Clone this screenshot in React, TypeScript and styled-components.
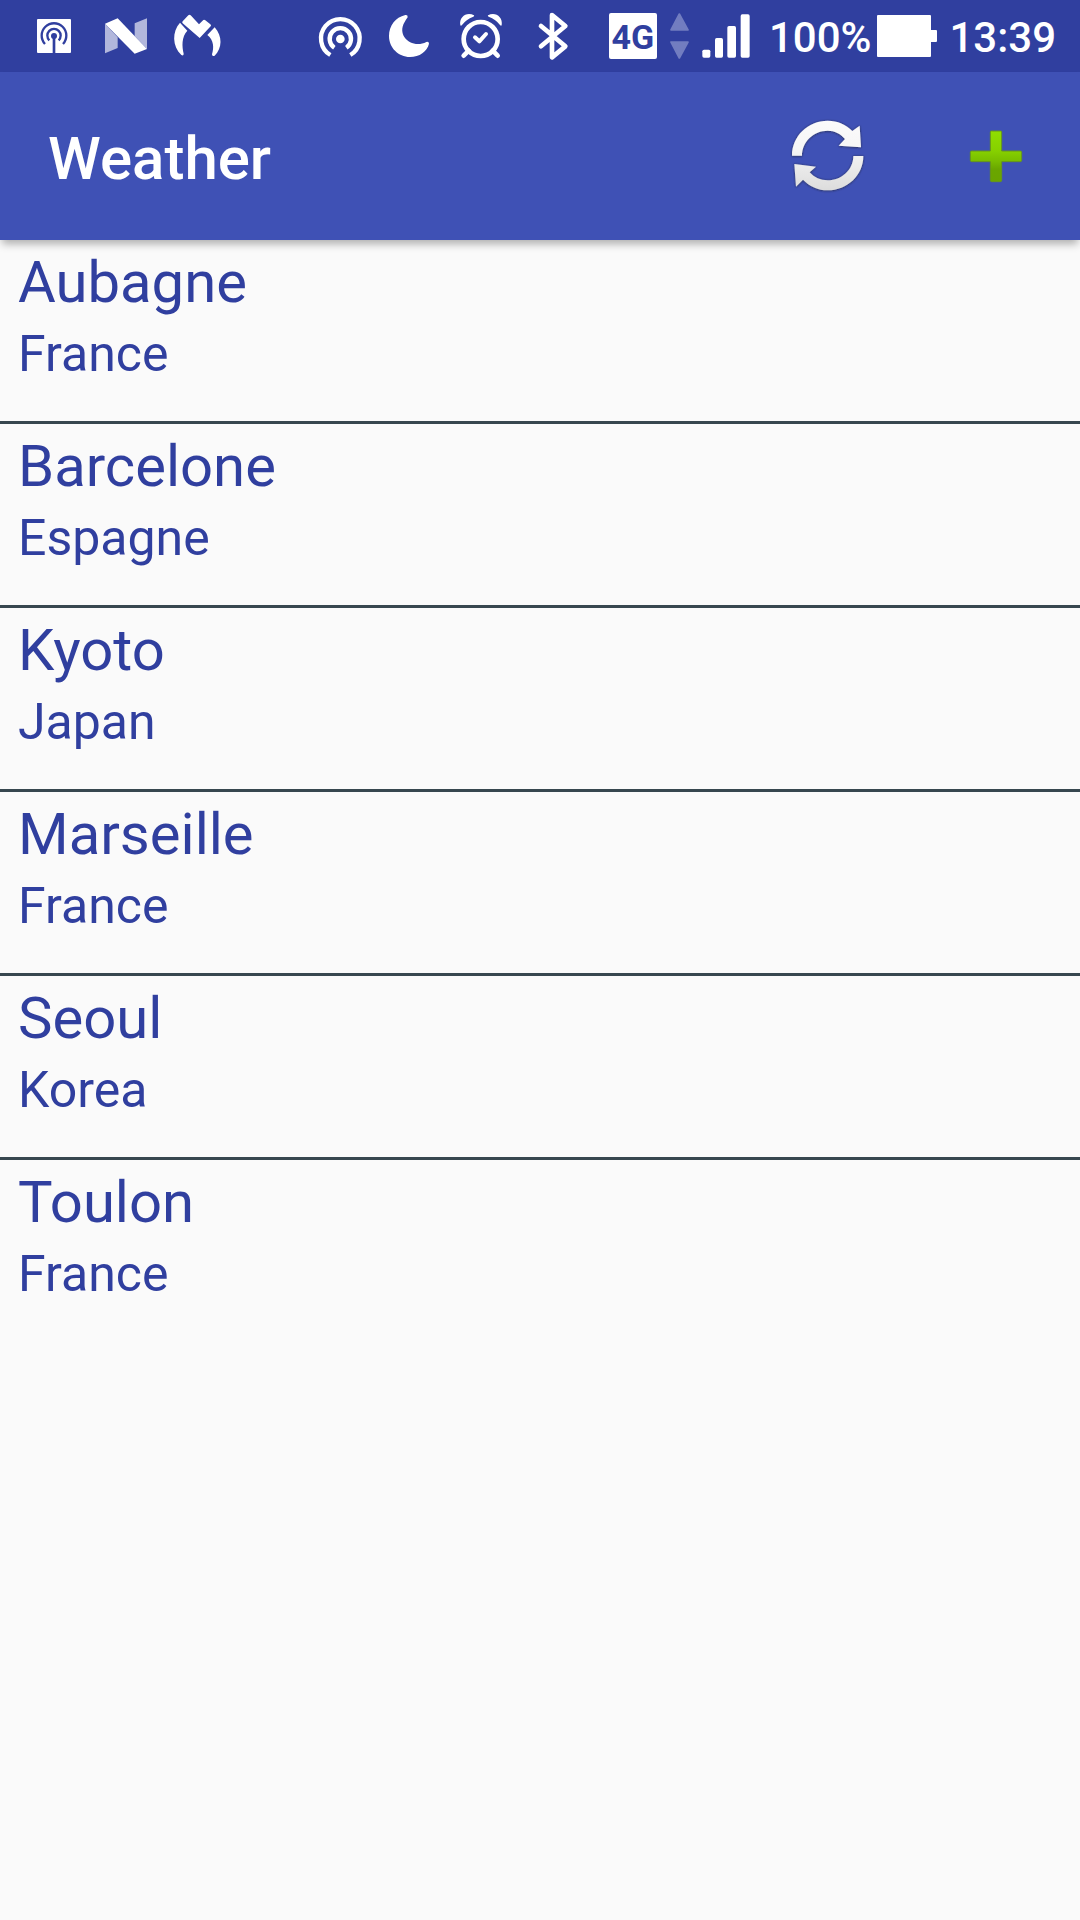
import React from 'react';
import styled, { createGlobalStyle } from 'styled-components';

const GlobalStyle = createGlobalStyle`
  *, *::before, *::after { box-sizing: border-box; }
  body {
    margin: 0;
    background: #fafafa;
    font-family: Roboto, "Noto Sans", sans-serif;
  }
`;

const Screen = styled.div`
  display: flex;
  flex-direction: column;
  min-height: 100vh;
  background: #fafafa;
`;

const StatusBar = styled.div`
  display: flex;
  align-items: center;
  height: 72px;
  padding: 0 24px 0 18px;
  background: #303f9f;
  color: #fff;
`;

const StatusGroup = styled.div<{ $end?: boolean }>`
  display: flex;
  align-items: center;
  margin-left: ${(p) => (p.$end ? 'auto' : '0')};
`;

const StatusText = styled.span`
  padding-top: 4px;
  font-size: 42px;
  font-weight: 500;
  line-height: 48px;
`;

const Glyph = styled.svg`
  display: block;
  flex: none;
  width: 72px;
  height: 72px;
  fill: #fff;
`;

const NetworkBadge = styled.span`
  width: 48px;
  height: 46px;
  margin: 0 13px 0 17px;
  border-radius: 2px;
  background: #fff;
  color: #303f9f;
  font-size: 34px;
  font-weight: 700;
  line-height: 48px;
  text-align: center;
`;

const Signal = styled.svg`
  display: block;
  width: 80px;
  height: 72px;
  margin-right: 19px;
  fill: #fff;
`;

const Battery = styled.svg`
  display: block;
  width: 60px;
  height: 42px;
  margin: 0 12px 0 6px;
  fill: #fff;
`;

const AppBar = styled.header`
  display: flex;
  align-items: center;
  justify-content: space-between;
  position: relative;
  height: 168px;
  padding-left: 48px;
  background: #3f51b5;
  box-shadow: 0 6px 8px -2px rgba(0, 0, 0, 0.3);
`;

const Title = styled.h1`
  margin: 0;
  padding-top: 6px;
  color: #fff;
  font-size: 60px;
  font-weight: 500;
  line-height: 72px;
`;

const Actions = styled.div`
  display: flex;
`;

const ActionButton = styled.button`
  display: flex;
  align-items: center;
  justify-content: center;
  width: 168px;
  height: 168px;
  padding: 0;
  border: 0;
  background: transparent;
  cursor: pointer;

  svg {
    display: block;
    width: 96px;
    height: 96px;
  }
`;

const CityList = styled.ul`
  margin: 0;
  padding: 0;
  list-style: none;
`;

const CityRow = styled.li`
  height: 184px;
  padding: 6px 18px 0;
  border-bottom: 3px solid #37474f;
  color: #303f9f;

  &:last-child {
    border-bottom: 0;
  }
`;

const CityName = styled.div`
  font-size: 58px;
  line-height: 72px;
`;

const Country = styled.div`
  font-size: 50px;
  line-height: 72px;
`;

const cities = [
  { name: 'Aubagne', country: 'France' },
  { name: 'Barcelone', country: 'Espagne' },
  { name: 'Kyoto', country: 'Japan' },
  { name: 'Marseille', country: 'France' },
  { name: 'Seoul', country: 'Korea' },
  { name: 'Toulon', country: 'France' },
];

const CastGlyph = () => (
  <Glyph viewBox="-6 0 216 216" aria-hidden="true">
    <rect x="51" y="57" width="102" height="102" rx="3" />
    <g fill="none" stroke="#303f9f" strokeWidth="7">
      <path d="M75 132A37 37 0 1 1 129 132" />
      <path d="M88 121A20 20 0 1 1 116 121" />
      <path d="M102 108V159" strokeWidth="8" />
    </g>
    <circle cx="102" cy="108" r="9" fill="#303f9f" />
  </Glyph>
);

const NougatGlyph = () => (
  <Glyph viewBox="210 0 216 216" aria-hidden="true">
    <path d="M255 71L293 112V144L255 160ZM344 70L381 55V147L344 108Z" fill="#b2b7dc" />
    <path d="M255 71L293 55L381 147L344 161Z" />
  </Glyph>
);

const ClawGlyph = () => (
  <Glyph viewBox="426 0 216 216" aria-hidden="true">
    <path d="M488 70Q485 67 488 64L505 46Q508 43 512 46L537 73L550 60Q553 58 556 61L571 73Q575 76 572 79L539 114Z" />
    <path d="M480 68L502 92C484 111 486 139 491 161Q491 169 484 165C456 138 456 94 480 68Z" />
    <path d="M584 82L562 105C582 121 582 143 576 163Q576 171 584 167C607 145 608 109 584 82Z" />
  </Glyph>
);

const HotspotGlyph = () => (
  <Glyph viewBox="12 0 216 216" aria-hidden="true">
    <circle cx="121" cy="117" r="13" />
    <g fill="none" stroke="#fff" strokeWidth="13">
      <path d="M91 165A58 58 0 1 1 151 165" />
      <path d="M103 143A32 32 0 1 1 139 143" />
    </g>
  </Glyph>
);

const MoonGlyph = () => (
  <Glyph viewBox="228 0 216 216" aria-hidden="true">
    <path d="M316 45C286 52 267 78 267 108C267 143 295 171 330 171C358 171 382 154 387 131Q387 124 379 126C337 148 288 108 314 66Q318 59 323 52Q324 44 316 45Z" />
  </Glyph>
);

const AlarmGlyph = () => (
  <Glyph viewBox="444 0 216 216" aria-hidden="true">
    <path d="M481 76C476 49 502 34 522 46Q524 48 520 50Q498 58 486 75Q483 79 481 76ZM605 76C610 49 584 34 564 46Q562 48 566 50Q588 58 600 75Q603 79 605 76Z" />
    <g fill="none" stroke="#fff" strokeWidth="14" strokeLinecap="round" strokeLinejoin="round">
      <circle cx="542" cy="117" r="51" />
      <path d="M506 152L491 167M578 152L593 167" />
      <path d="M525 112L538 124L558 102" strokeWidth="12" />
    </g>
  </Glyph>
);

const BluetoothGlyph = () => (
  <Glyph viewBox="660 0 216 216" aria-hidden="true">
    <path
      d="M723 78L796 139L756 172V45L796 78L723 139"
      fill="none"
      stroke="#fff"
      strokeWidth="14"
      strokeLinecap="round"
      strokeLinejoin="round"
    />
  </Glyph>
);

const SignalGlyph = () => (
  <Signal viewBox="240 0 240 216" aria-hidden="true">
    <path
      d="M268 42L294 90H243ZM243 126H294L268 174Z"
      fill="#727dc0"
      stroke="#727dc0"
      strokeWidth="5"
      strokeLinejoin="round"
    />
    <rect x="337" y="149" width="24" height="24" rx="5" />
    <rect x="375" y="114" width="24" height="59" rx="5" />
    <rect x="412" y="78" width="26" height="95" rx="5" />
    <rect x="452" y="43" width="27" height="130" rx="5" />
  </Signal>
);

const RefreshIcon = () => (
  <svg viewBox="30 24 288 288" aria-hidden="true">
    <defs>
      <linearGradient id="silver" gradientUnits="userSpaceOnUse" x1="0" y1="60" x2="0" y2="272">
        <stop offset="0" stopColor="#fbfbfb" />
        <stop offset="0.4" stopColor="#f6f6f6" />
        <stop offset="1" stopColor="#dcdcdc" />
      </linearGradient>
      <filter id="soft" x="-10%" y="-10%" width="120%" height="120%">
        <feDropShadow dx="0" dy="1" stdDeviation="3" floodColor="#222" floodOpacity="0.8" />
      </filter>
    </defs>
    <g fill="url(#silver)" filter="url(#soft)">
      <path d="M66 167C66 108 114 62 173 62C203 62 228 74 247 93L269 77L273 142L206 137L225 117C211 101 194 92 173 92C131 92 96 125 96 167Z" />
      <path d="M280 168C280 226 232 271 173 271C144 271 118 259 99 239L78 260L73 192L138 200L119 217C133 233 151 241 173 241C215 241 250 209 250 168Z" />
    </g>
  </svg>
);

const PlusIcon = () => (
  <svg viewBox="534 24 288 288" aria-hidden="true">
    <defs>
      <linearGradient id="leaf" gradientUnits="userSpaceOnUse" x1="0" y1="92" x2="0" y2="246">
        <stop offset="0" stopColor="#90de00" />
        <stop offset="0.4" stopColor="#86d000" />
        <stop offset="0.6" stopColor="#78bc00" />
        <stop offset="0.75" stopColor="#6aa600" />
        <stop offset="1" stopColor="#6aa400" />
      </linearGradient>
    </defs>
    <path
      d="M664 93H692Q695 93 695 96V153H751Q755 153 755 157V181Q755 185 751 185H695V241Q695 245 691 245H665Q661 245 661 241V185H605Q601 185 601 181V157Q601 153 605 153H661V96Q661 93 664 93Z"
      fill="url(#leaf)"
      stroke="#66961c"
      strokeWidth="3"
    />
  </svg>
);

export default function App() {
  return (
    <>
      <GlobalStyle />
      <Screen>
        <StatusBar>
          <StatusGroup>
            <CastGlyph />
            <NougatGlyph />
            <ClawGlyph />
          </StatusGroup>
          <StatusGroup $end>
            <HotspotGlyph />
            <MoonGlyph />
            <AlarmGlyph />
            <BluetoothGlyph />
            <NetworkBadge>4G</NetworkBadge>
            <SignalGlyph />
            <StatusText>100%</StatusText>
            <Battery viewBox="0 0 60 42" aria-hidden="true">
              <path d="M1 0H53Q54 0 54 1V15H59Q60 15 60 16V26Q60 27 59 27H54V41Q54 42 53 42H1Q0 42 0 41V1Q0 0 1 0Z" />
            </Battery>
            <StatusText as="time">13:39</StatusText>
          </StatusGroup>
        </StatusBar>
        <AppBar>
          <Title>Weather</Title>
          <Actions>
            <ActionButton type="button" aria-label="Refresh">
              <RefreshIcon />
            </ActionButton>
            <ActionButton type="button" aria-label="Add city">
              <PlusIcon />
            </ActionButton>
          </Actions>
        </AppBar>
        <main>
          <CityList>
            {cities.map((city) => (
              <CityRow key={city.name}>
                <CityName>{city.name}</CityName>
                <Country>{city.country}</Country>
              </CityRow>
            ))}
          </CityList>
        </main>
      </Screen>
    </>
  );
}
